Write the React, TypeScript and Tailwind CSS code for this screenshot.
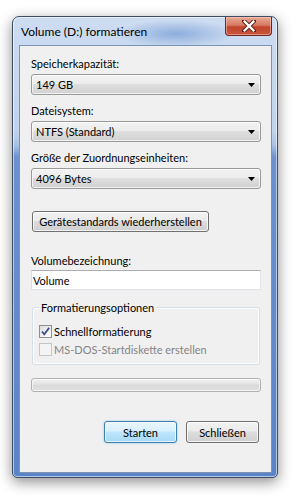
import React from "react";

const font = { fontFamily: "'Lato', 'Liberation Sans', sans-serif" };

function Combo({ value }: { value: string }) {
  return (
    <div className="flex h-[21px] w-[230px] items-center justify-between rounded-[3px] border border-[#9a9a9a] bg-[linear-gradient(180deg,#f3f3f3_0%,#ececec_45%,#dedede_50%,#d1d1d1_100%)] pl-[4px] pr-[5px] shadow-[inset_0_0_0_1px_rgba(255,255,255,0.7)]">
      <span className="whitespace-nowrap text-[11px] leading-[15px] text-black">{value}</span>
      <svg width="7" height="4" viewBox="0 0 7 4">
        <path d="M0 0 H7 L3.5 4 Z" fill="#000" />
      </svg>
    </div>
  );
}

function Label({ children }: { children: React.ReactNode }) {
  return <div className="h-[15px] whitespace-nowrap text-[11px] leading-[15px] text-black">{children}</div>;
}

export default function App() {
  return (
    <div className="min-h-[495px] w-[297px] bg-white pl-[12px] pt-[16px]" style={font}>
      <div className="flex h-[462px] w-[266px] flex-col rounded-t-[7px] rounded-b-[5px] border border-[#3f4d63] bg-[linear-gradient(180deg,#cddcf1_0px,#c0d3ed_115px,#a9c1e6_128px,#6b91cf_140px,#5a84c8_100%)] pb-[4px] pl-[6px] pr-[5px] shadow-[0_4px_14px_rgba(0,0,0,0.45),inset_0_0_0_1px_rgba(255,255,255,0.55)]">
        {/* Title bar */}
        <div className="flex h-[28px] items-start justify-between bg-[radial-gradient(ellipse_60px_14px_at_62%_60%,rgba(120,158,214,0.75)_0%,rgba(120,158,214,0)_100%)]">
          <span className="ml-[2px] mt-[7px] whitespace-nowrap text-[12px] leading-[15px] text-black">Volume (D:) formatieren</span>
          <div className="flex h-[19px] w-[47px] items-center justify-center rounded-b-[4px] border border-t-0 border-[#6b2a20] bg-[linear-gradient(180deg,#e9a994_0%,#d77a63_45%,#c2442c_55%,#c8553c_100%)] shadow-[inset_0_0_0_1px_rgba(255,210,200,0.5)]">
            <svg width="14" height="12" viewBox="0 0 14 12">
              <path d="M2 1 L12 11 M12 1 L2 11" stroke="#5a1e14" strokeWidth="4.2" strokeLinecap="square" />
              <path d="M2.6 1.6 L11.4 10.4 M11.4 1.6 L2.6 10.4" stroke="#ffffff" strokeWidth="2.3" strokeLinecap="square" />
            </svg>
          </div>
        </div>
        {/* Client */}
        <div className="flex h-[428px] w-[253px] flex-col border border-[#7e93b2] bg-[#f0f0f0] pl-[11px] pt-[10px]">
          <Label>Speicherkapazität:</Label>
          <div className="mt-[3px]">
            <Combo value="149 GB" />
          </div>
          <div className="mt-[8px]">
            <Label>Dateisystem:</Label>
          </div>
          <div className="mt-[3px]">
            <Combo value="NTFS (Standard)" />
          </div>
          <div className="mt-[8px]">
            <Label>Größe der Zuordnungseinheiten:</Label>
          </div>
          <div className="mt-[3px]">
            <Combo value="4096 Bytes" />
          </div>
          <div className="ml-[1px] mt-[22px] flex h-[21px] w-[177px] items-center justify-center whitespace-nowrap rounded-[3px] border border-[#707070] bg-[linear-gradient(180deg,#f2f2f2_0%,#ebebeb_45%,#dddddd_50%,#cfcfcf_100%)] text-[11px] leading-[15px] text-black shadow-[inset_0_0_0_1px_rgba(255,255,255,0.75)]">
            Gerätestandards wiederherstellen
          </div>
          <div className="mt-[21px]">
            <Label>Volumebezeichnung:</Label>
          </div>
          <div className="mt-[2px] flex h-[20px] w-[230px] items-center border border-[#e2e3ea] border-t-[#abadb3] border-l-[#dbdfe6] bg-white pl-[1px] text-[11px] leading-[15px] text-black">
            Volume
          </div>
          {/* Group box */}
          <div className="relative ml-[1px] mt-[17px] h-[58px] w-[228px] rounded-[3px] border border-[#d5dfe5] pl-[6px] pt-[16px] shadow-[inset_0_0_0_1px_#ffffff]">
            <span className="absolute left-[6px] top-[-8px] whitespace-nowrap bg-[#f0f0f0] px-[2px] text-[11px] leading-[15px] text-black">
              Formatierungsoptionen
            </span>
            <div className="flex h-[15px] items-center gap-[2px]">
              <div className="flex h-[13px] w-[13px] items-center justify-center border border-[#8e8f8f] bg-[linear-gradient(135deg,#dcdcdc_0%,#ffffff_100%)]">
                <svg width="11" height="11" viewBox="0 0 11 11">
                  <path d="M2 5.5 L4.3 8.3 L9.2 1.8" stroke="#3c4e8c" strokeWidth="1.8" fill="none" />
                </svg>
              </div>
              <span className="whitespace-nowrap text-[11px] leading-[15px] text-black">Schnellformatierung</span>
            </div>
            <div className="mt-[3px] flex h-[15px] items-center gap-[2px]">
              <div className="h-[13px] w-[13px] border border-[#c4c4c4] bg-[#f4f4f4]" />
              <span className="whitespace-nowrap text-[11px] leading-[15px] text-[#858585]">MS-DOS-Startdiskette erstellen</span>
            </div>
          </div>
          {/* Progress */}
          <div className="mt-[13px] h-[14px] w-[230px] rounded-[3px] border border-[#b2b2b2] bg-[linear-gradient(180deg,#f3f3f3_0%,#e6e6e6_35%,#d9d9d9_55%,#e2e2e2_100%)] shadow-[inset_0_0_0_1px_rgba(255,255,255,0.6)]" />
          {/* Buttons */}
          <div className="mt-[29px] flex w-[228px] justify-end gap-[9px]">
            <div className="flex h-[22px] w-[73px] items-center justify-center rounded-[3px] border border-[#3c7fb1] bg-[linear-gradient(180deg,#eaf6fd_0%,#d9f0fc_45%,#bee6fd_50%,#a7d9f5_100%)] text-[11px] leading-[15px] text-black shadow-[inset_0_0_0_1px_rgba(255,255,255,0.7),0_0_2px_rgba(60,160,230,0.6)]">
              Starten
            </div>
            <div className="flex h-[22px] w-[73px] items-center justify-center rounded-[3px] border border-[#707070] bg-[linear-gradient(180deg,#f2f2f2_0%,#ebebeb_45%,#dddddd_50%,#cfcfcf_100%)] text-[11px] leading-[15px] text-black shadow-[inset_0_0_0_1px_rgba(255,255,255,0.75)]">
              Schließen
            </div>
          </div>
        </div>
      </div>
    </div>
  );
}
